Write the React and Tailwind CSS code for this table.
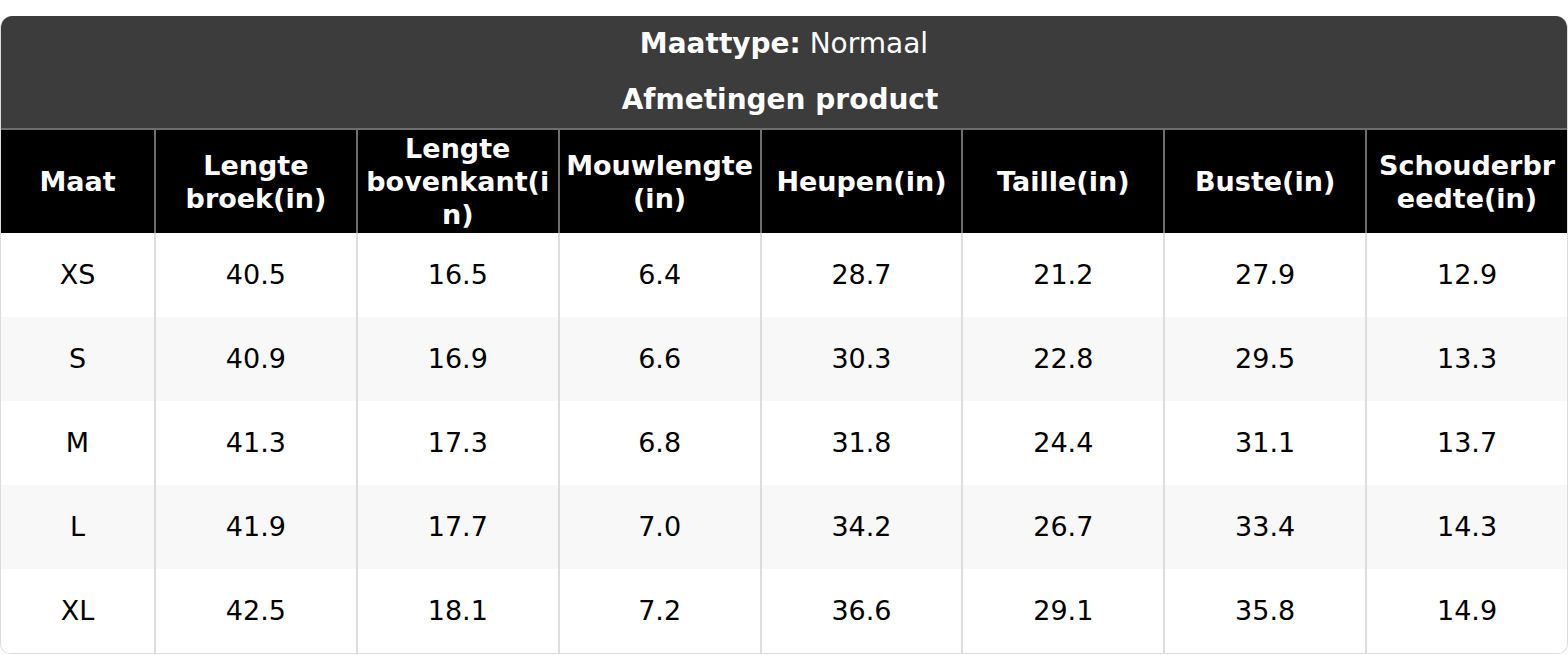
import React from "react";

const columns = [
  "Maat",
  "Lengte broek(in)",
  "Lengte bovenkant(in)",
  "Mouwlengte (in)",
  "Heupen(in)",
  "Taille(in)",
  "Buste(in)",
  "Schouderbreedte(in)",
];

const rows = [
  ["XS", "40.5", "16.5", "6.4", "28.7", "21.2", "27.9", "12.9"],
  ["S", "40.9", "16.9", "6.6", "30.3", "22.8", "29.5", "13.3"],
  ["M", "41.3", "17.3", "6.8", "31.8", "24.4", "31.1", "13.7"],
  ["L", "41.9", "17.7", "7.0", "34.2", "26.7", "33.4", "14.3"],
  ["XL", "42.5", "18.1", "7.2", "36.6", "29.1", "35.8", "14.9"],
];

const App = () => {
  return (
    <div className="bg-white pt-4 font-['DejaVu_Sans',sans-serif]">
      <div className="overflow-hidden rounded-t-xl rounded-b-[10px] border border-t-0 border-[#dcdcdc]">
        {/* titel */}
        <div className="bg-[#3c3c3c] text-center text-[28px] leading-8 text-white">
          <div className="py-3">
            <span className="font-bold">Maattype:</span> Normaal
          </div>
          <div className="py-3 pr-2 font-bold">Afmetingen product</div>
        </div>

        <table className="w-full table-fixed border-separate border-spacing-0">
          <colgroup>
            <col className="w-[153px]" />
            {columns.slice(1).map((c) => (
              <col key={c} />
            ))}
          </colgroup>
          <thead>
            <tr>
              {columns.map((col, i) => (
                <th
                  key={col}
                  className={`h-[105px] border-t-2 border-[#6e6e6e] bg-black px-1 text-center text-[27px] font-bold leading-[33px] break-words text-white ${
                    i === 0 ? "" : "border-l-2"
                  }`}
                >
                  {col}
                </th>
              ))}
            </tr>
          </thead>
          <tbody>
            {rows.map((row, r) => (
              <tr key={row[0]} className={r % 2 === 1 ? "bg-[#f8f8f8]" : "bg-white"}>
                {row.map((cell, i) => (
                  <td
                    key={i}
                    className={`h-[84px] border-[#dddddd] text-center text-[27px] text-black ${
                      i === 0 ? "" : "border-l-2"
                    }`}
                  >
                    {cell}
                  </td>
                ))}
              </tr>
            ))}
          </tbody>
        </table>
      </div>
    </div>
  );
};

export default App;
